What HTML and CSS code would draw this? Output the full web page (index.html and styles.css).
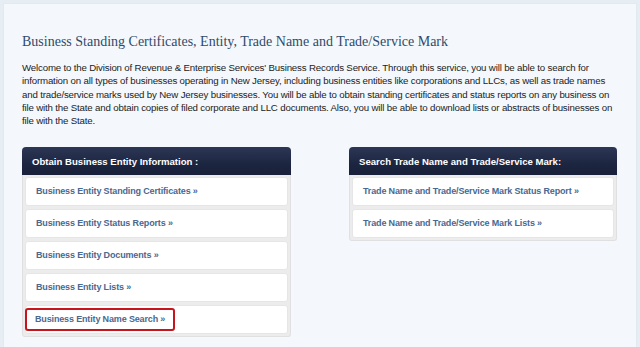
FILE: index.html
```html
<!DOCTYPE html>
<html>
<head>
<meta charset="utf-8">
<link rel="stylesheet" href="styles.css">
</head>
<body>
<div class="page">
  <h1 class="title">Business Standing Certificates, Entity, Trade Name and Trade/Service Mark</h1>
  <p class="intro">Welcome to the Division of Revenue &amp; Enterprise Services' Business Records Service. Through this service, you will be able to search for information on all types of businesses operating in New Jersey, including business entities like corporations and LLCs, as well as trade names and trade/service marks used by New Jersey businesses. You will be able to obtain standing certificates and status reports on any business on file with the State and obtain copies of filed corporate and LLC documents. Also, you will be able to download lists or abstracts of businesses on file with the State.</p>
  <div class="columns">
    <div class="box">
      <div class="box-head">Obtain Business Entity Information :</div>
      <div class="box-list">
        <div class="item"><a class="link">Business Entity Standing Certificates »</a></div>
        <div class="item"><a class="link">Business Entity Status Reports »</a></div>
        <div class="item"><a class="link">Business Entity Documents »</a></div>
        <div class="item"><a class="link">Business Entity Lists »</a></div>
        <div class="item"><a class="link highlight">Business Entity Name Search »</a></div>
      </div>
    </div>
    <div class="box">
      <div class="box-head">Search Trade Name and Trade/Service Mark:</div>
      <div class="box-list">
        <div class="item"><a class="link">Trade Name and Trade/Service Mark Status Report »</a></div>
        <div class="item"><a class="link">Trade Name and Trade/Service Mark Lists »</a></div>
      </div>
    </div>
  </div>
</div>
</body>
</html>
```
FILE: styles.css
```css
html, body {
  margin: 0;
  padding: 0;
  background: #e6edf3;
}
.page {
  box-sizing: border-box;
  margin: 3px 3px 0 3px;
  background: #f4f8fc;
  border: 1px solid #e2e9ef;
  border-bottom: none;
  border-radius: 2px 2px 0 0;
  padding: 29px 19px 0 18px;
  height: 344px;
  font-family: "Liberation Sans", Arial, sans-serif;
}
.title {
  margin: 0 0 10px 0;
  font-family: "Liberation Serif", Georgia, serif;
  font-weight: normal;
  font-size: 14px;
  line-height: 18px;
  color: #2f4b6b;
}
.intro {
  margin: 0 0 20px 0;
  font-size: 9.7px;
  line-height: 13.3px;
  letter-spacing: -0.17px;
  color: #222;
}
.columns {
  display: grid;
  grid-template-columns: 269px 268px;
  column-gap: 58px;
  align-items: start;
}
.box-head {
  height: 28px;
  line-height: 29px;
  padding-left: 10px;
  border-radius: 4px 4px 0 0;
  background: linear-gradient(#2c3756, #1d2640 60%, #18203a);
  color: #fff;
  font-weight: bold;
  font-size: 9.6px;
}
.box-list {
  background: #ececec;
  border: 1px solid #e0e0e0;
  border-top: none;
  border-radius: 0 0 3px 3px;
  padding: 2px;
  display: flex;
  flex-direction: column;
  gap: 3px;
}
.item {
  background: #fff;
  border: 1px solid #e6e6e6;
  border-radius: 3px;
  padding: 2px 0;
}
.link {
  display: inline-block;
  padding: 3px 8px;
  border: 2px solid transparent;
  border-radius: 3px;
  font-size: 9px;
  line-height: 13px;
  letter-spacing: -0.15px;
  font-weight: bold;
  color: #4a6890;
}
.highlight {
  border-color: #c8141c;
  margin-left: -1px;
}
```
